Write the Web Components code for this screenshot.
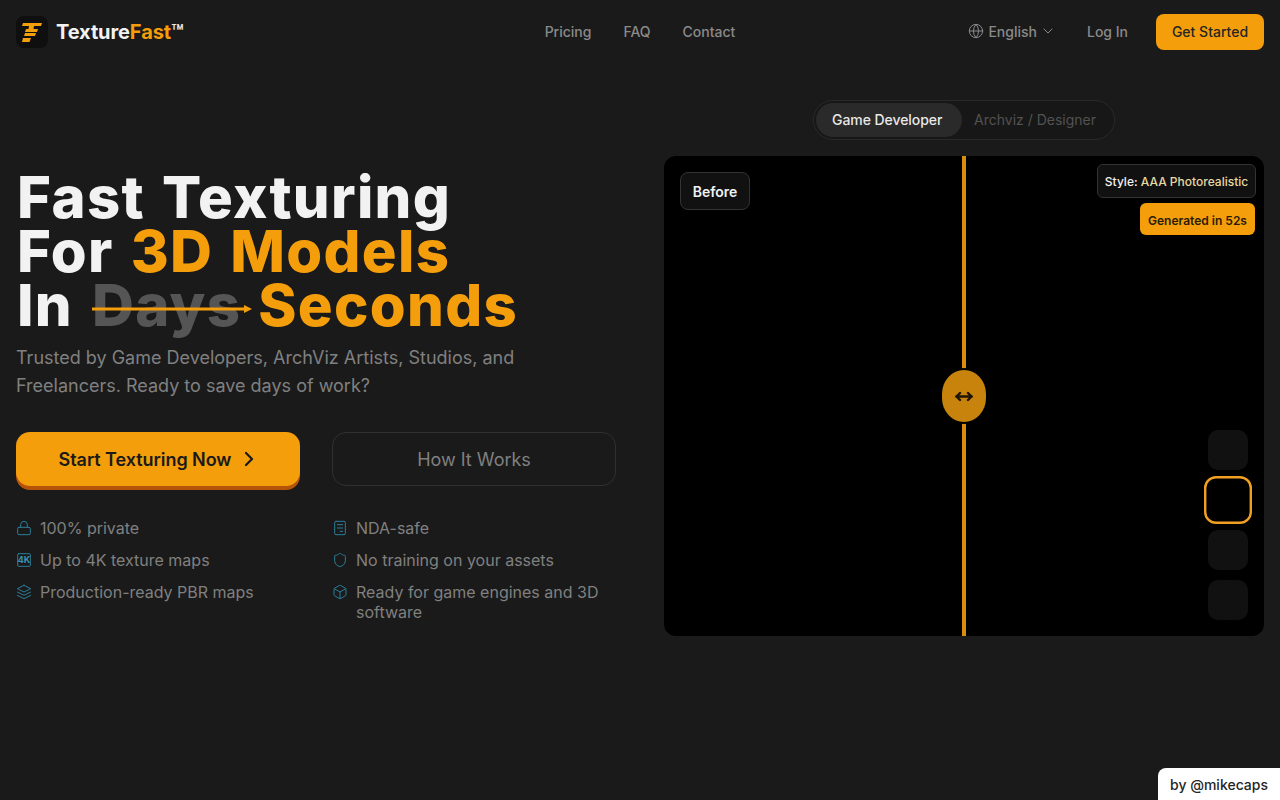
<!DOCTYPE html>
<html lang="en">
<head>
<meta charset="utf-8">
<title>TextureFast</title>
<style>
    html, body {
        margin: 0;
        height: 100%;
        background-color: #1a1a1a;
        font-family: Inter, "Liberation Sans", sans-serif;
        overflow: hidden;
    }
</style>
</head>
<body>
<tf-app></tf-app>

<script>
const ICONS = {
    globe: '<circle cx="12" cy="12" r="10"/><path d="M12 2a14.5 14.5 0 0 0 0 20 14.5 14.5 0 0 0 0-20"/><path d="M2 12h20"/>',
    chevron: '<path d="m6 9 6 6 6-6"/>',
    right: '<path d="m9 18 6-6-6-6"/>',
    lock: '<rect x="2.5" y="11" width="19" height="11" rx="2"/><path d="M7 11V7a5 5 0 0 1 10 0v4"/>',
    res: '<rect x="2.5" y="2.5" width="19" height="19" rx="1.5"/><text x="12" y="17" text-anchor="middle" font-size="13.5" font-weight="700" font-family="Inter, sans-serif" fill="#3a93b3" stroke="none">4K</text>',
    layers: '<path d="M12 2 2 7l10 5 10-5-10-5z"/><path d="m2 17 10 5 10-5"/><path d="m2 12 10 5 10-5"/>',
    file: '<rect x="4" y="2" width="16" height="20" rx="2"/><path d="M8 7h8"/><path d="M8 12h8"/><path d="M12 17h4"/>',
    shield: '<path d="M20 13c0 5-3.5 7.5-7.66 8.95a1 1 0 0 1-.67-.01C7.5 20.5 4 18 4 13V6a1 1 0 0 1 1-1c2 0 4.5-1.2 6.24-2.72a1.17 1.17 0 0 1 1.52 0C14.51 3.81 17 5 19 5a1 1 0 0 1 1 1z"/>',
    box: '<path d="M21 8a2 2 0 0 0-1-1.73l-7-4a2 2 0 0 0-2 0l-7 4A2 2 0 0 0 3 8v8a2 2 0 0 0 1 1.73l7 4a2 2 0 0 0 2 0l7-4A2 2 0 0 0 21 16Z"/><path d="m3.3 7 8.7 5 8.7-5"/><path d="M12 22V12"/>'
};

function icon(name, size, stroke = 2) {
    return `<svg width="${size}" height="${size}" viewBox="0 0 24 24" fill="none" stroke="currentColor" stroke-width="${stroke}" stroke-linecap="round" stroke-linejoin="round" aria-hidden="true">${ICONS[name]}</svg>`;
}

class BaseElement extends HTMLElement {
    constructor() {
        super();
        this.attachShadow({ mode: 'open' });
    }

    connectedCallback() {
        const template = document.createElement('template');
        template.innerHTML = this.html();
        this.shadowRoot.innerHTML = '';
        this.shadowRoot.appendChild(template.content.cloneNode(true));
    }
}

class TfHeader extends BaseElement {
    html() {
        return `
            <style>
                :host {
                    display: grid;
                    grid-template-columns: 1fr auto 1fr;
                    align-items: center;
                    height: 64px;
                    padding: 0 16px;
                    font-size: 14px;
                    font-weight: 500;
                    color: #8a8a8a;
                }
                .brand { display: flex; align-items: center; gap: 8px; }
                .mark {
                    display: block;
                    width: 32px;
                    height: 32px;
                    border-radius: 8px;
                    background-color: #0f0f0f;
                }
                .name { font-size: 20px; font-weight: 700; color: #f2f2f2; letter-spacing: -0.1px; }
                .name b { font-weight: 700; color: #f59e0b; }
                .name i { font-style: normal; color: #e5e5e5; }
                nav { display: flex; gap: 32px; padding-bottom: 2px; }
                .actions { display: flex; align-items: center; justify-content: flex-end; }
                .lang { display: flex; align-items: center; gap: 4px; margin-right: 31px; padding-bottom: 2px; }
                .lang svg { display: block; }
                .lang svg:last-child { margin-left: -1px; }
                .login { margin-right: 28px; padding-bottom: 2px; }
                .start {
                    display: flex;
                    align-items: center;
                    justify-content: center;
                    box-sizing: border-box;
                    width: 108px;
                    height: 36px;
                    padding-bottom: 2px;
                    border-radius: 8px;
                    background-color: #f59e0b;
                    color: #262626;
                }
            </style>
            <div class="brand">
                <svg class="mark" viewBox="0 0 32 32" aria-hidden="true">
                    <g fill="#f59e0b">
                        <polygon points="7,7 26,7 25,10 6,10"/>
                        <polygon points="13,10 18,10 17.5,13 12.5,13"/>
                        <polygon points="10,13 22,13 21,16 9,16"/>
                        <polygon points="9,17 20,17 19,20 8,20"/>
                        <polygon points="7,22 15,22 13.5,26 6,26"/>
                    </g>
                </svg>
                <span class="name">Texture<b>Fast</b><i>™</i></span>
            </div>
            <nav><span>Pricing</span><span>FAQ</span><span>Contact</span></nav>
            <div class="actions">
                <span class="lang">${icon('globe', 16, 1.5)}<span>English</span>${icon('chevron', 16, 1.5)}</span>
                <span class="login">Log In</span>
                <span class="start">Get Started</span>
            </div>
        `;
    }
}

class TfFeature extends BaseElement {
    html() {
        return `
            <style>
                :host {
                    display: flex;
                    gap: 8px;
                    font-size: 16px;
                    line-height: 20px;
                    color: #808080;
                }
                svg { flex: none; margin-top: 2px; color: #2c7d99; }
            </style>
            ${icon(this.getAttribute('icon'), 16, 1.5)}
            <span><slot></slot></span>
        `;
    }
}

class TfHero extends BaseElement {
    html() {
        return `
            <style>
                :host { display: block; padding-top: 70px; }
                h1 {
                    margin: 0 0 0 1px;
                    font-size: 58px;
                    line-height: 54px;
                    font-weight: 800;
                    letter-spacing: 1.3px;
                    word-spacing: 3px;
                    color: #f2f2f2;
                }
                em { font-style: normal; color: #f59e0b; }
                .days { position: relative; display: inline-block; margin-left: 2px; color: #555; }
                .arrow { position: absolute; left: 0; top: 25px; }
                p {
                    margin: 12px 0 0;
                    font-size: 18px;
                    line-height: 28px;
                    color: #808080;
                }
                .buttons {
                    display: grid;
                    grid-template-columns: 1fr 1fr;
                    gap: 32px;
                    margin-top: 32px;
                }
                .btn {
                    display: flex;
                    align-items: center;
                    justify-content: center;
                    box-sizing: border-box;
                    height: 54px;
                    border-radius: 14px;
                    font-size: 18px;
                    font-weight: 500;
                }
                .primary {
                    gap: 6px;
                    padding-left: 4px;
                    background-color: #f59e0b;
                    box-shadow: 0 4px 0 #b45309;
                    color: #1a1a1a;
                    font-weight: 600;
                    letter-spacing: -0.05px;
                }
                .secondary { border: 1px solid #303030; color: #808080; font-weight: 400; }
                .features {
                    display: grid;
                    grid-template-columns: 1fr 1fr;
                    gap: 12px 32px;
                    margin-top: 32px;
                }
            </style>
            <h1>Fast Texturing<br>For <em>3D Models</em><br>In <span class="days">Days<svg class="arrow" width="160" height="12" viewBox="0 0 160 12" aria-hidden="true"><path d="M0 6h154" stroke="#f59e0b" stroke-width="3"/><path d="M152 2l8 4-8 4z" fill="#f59e0b"/></svg></span> <em>Seconds</em></h1>
            <p>Trusted by Game Developers, ArchViz Artists, Studios, and Freelancers. Ready to save days of work?</p>
            <div class="buttons">
                <div class="btn primary">Start Texturing Now ${icon('right', 24, 2.25)}</div>
                <div class="btn secondary">How It Works</div>
            </div>
            <div class="features">
                <tf-feature icon="lock">100% private</tf-feature>
                <tf-feature icon="file">NDA-safe</tf-feature>
                <tf-feature icon="res">Up to 4K texture maps</tf-feature>
                <tf-feature icon="shield">No training on your assets</tf-feature>
                <tf-feature icon="layers">Production-ready PBR maps</tf-feature>
                <tf-feature icon="box">Ready for game engines and 3D software</tf-feature>
            </div>
        `;
    }
}

class TfToggle extends BaseElement {
    html() {
        return `
            <style>
                :host {
                    display: flex;
                    box-sizing: border-box;
                    width: 302px;
                    height: 40px;
                    padding: 2px;
                    border: 1px solid #2a2a2a;
                    border-radius: 20px;
                    background-color: #171717;
                    font-size: 14px;
                    font-weight: 500;
                    color: #525252;
                }
                span { display: flex; align-items: center; box-sizing: border-box; padding-bottom: 2px; border-radius: 17px; }
                .on { width: 146px; padding-left: 16px; background-color: #2a2a2a; color: #e8e8e8; letter-spacing: -0.06px; }
                .off { flex: 1; padding-left: 12px; font-weight: 400; }
            </style>
            <span class="on">Game Developer</span>
            <span class="off">Archviz / Designer</span>
        `;
    }
}

class TfViewer extends BaseElement {
    html() {
        return `
            <style>
                :host {
                    position: relative;
                    display: block;
                    height: 480px;
                    border-radius: 12px;
                    background-color: #000;
                    overflow: hidden;
                }
                .label {
                    position: absolute;
                    box-sizing: border-box;
                    display: flex;
                    align-items: center;
                    justify-content: center;
                    background-color: #111;
                    border: 1px solid #333;
                    color: #f2f2f2;
                }
                .before { left: 16px; top: 16px; width: 70px; height: 38px; border-radius: 8px; font-size: 14px; font-weight: 600; }
                .style { right: 8px; top: 8px; width: 159px; height: 34px; border-radius: 6px; font-size: 12px; font-weight: 500; white-space: pre; }
                .style b { font-weight: 500; color: #e6d9a2; }
                .time {
                    right: 9px;
                    top: 47px;
                    width: 115px;
                    height: 32px;
                    padding-top: 2px;
                    border: 0;
                    border-radius: 6px;
                    background-color: #f59e0b;
                    color: #2a1c04;
                    font-size: 12px;
                    font-weight: 600;
                }
                .line { position: absolute; left: 298px; top: 0; bottom: 0; width: 4px; background-color: #d98d0b; }
                .handle {
                    position: absolute;
                    left: 278px;
                    top: 214px;
                    display: flex;
                    align-items: center;
                    justify-content: center;
                    width: 44px;
                    height: 52px;
                    border-radius: 22px / 24px;
                    background-color: #c8830c;
                    box-shadow: 0 0 0 2px #000;
                }
                .thumbs {
                    position: absolute;
                    right: 16px;
                    bottom: 16px;
                    display: flex;
                    flex-direction: column;
                    gap: 10px;
                }
                .thumbs i { display: block; box-sizing: border-box; width: 40px; height: 40px; border-radius: 10px; background-color: #111; }
                .thumbs i.on { transform: scale(1.2); background-color: #000; border: 2px solid #f0a020; }
            </style>
            <div class="line"></div>
            <div class="handle">
                <svg width="18" height="11" viewBox="0 0 18 11" fill="none" stroke="#1f1405" stroke-width="2.4" stroke-linecap="round" stroke-linejoin="round" aria-hidden="true"><path d="M1.5 5.5h15"/><path d="M5 2 1.5 5.5 5 9"/><path d="M13 2l3.5 3.5L13 9"/></svg>
            </div>
            <div class="label before">Before</div>
            <div class="label style">Style: <b>AAA Photorealistic</b></div>
            <div class="label time">Generated in 52s</div>
            <div class="thumbs"><i></i><i class="on"></i><i></i><i></i></div>
        `;
    }
}

class TfApp extends BaseElement {
    html() {
        return `
            <style>
                :host { display: block; }
                main {
                    display: grid;
                    grid-template-columns: 600px 600px;
                    gap: 48px;
                    padding: 36px 16px 0;
                }
                .right { display: flex; flex-direction: column; align-items: center; gap: 16px; }
                tf-viewer { align-self: stretch; }
                .credit {
                    position: fixed;
                    right: 0;
                    bottom: 0;
                    width: 122px;
                    height: 32px;
                    display: flex;
                    align-items: center;
                    justify-content: center;
                    border-top-left-radius: 8px;
                    background-color: #fff;
                    color: #262626;
                    font-size: 14px;
                    font-weight: 500;
                }
            </style>
            <tf-header></tf-header>
            <main>
                <tf-hero></tf-hero>
                <div class="right">
                    <tf-toggle></tf-toggle>
                    <tf-viewer></tf-viewer>
                </div>
            </main>
            <div class="credit">by @mikecaps</div>
        `;
    }
}

window.customElements.define('tf-header', TfHeader);
window.customElements.define('tf-feature', TfFeature);
window.customElements.define('tf-hero', TfHero);
window.customElements.define('tf-toggle', TfToggle);
window.customElements.define('tf-viewer', TfViewer);
window.customElements.define('tf-app', TfApp);
</script>
</body>
</html>
